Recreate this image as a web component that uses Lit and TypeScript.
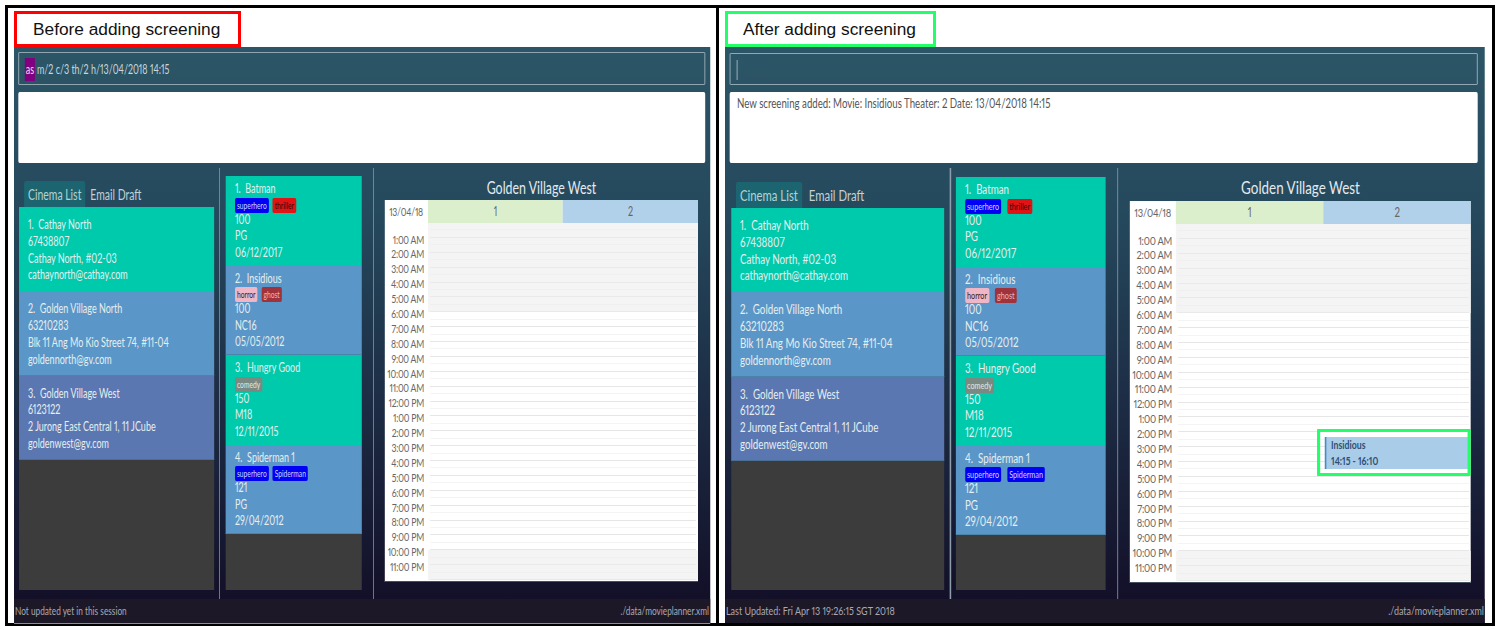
import { LitElement, css, html } from "lit";
import { customElement, property } from "lit/decorators.js";

const HOUR_HEIGHT = 14.9;

const CINEMAS = [
  { name: "1.  Cathay North", phone: "67438807", address: "Cathay North, #02-03", email: "cathaynorth@cathay.com", tone: "teal" },
  { name: "2.  Golden Village North", phone: "63210283", address: "Blk 11 Ang Mo Kio Street 74, #11-04", email: "goldennorth@gv.com", tone: "blue" },
  { name: "3.  Golden Village West", phone: "6123122", address: "2 Jurong East Central 1, 11 JCube", email: "goldenwest@gv.com", tone: "indigo" },
];

const MOVIES = [
  { name: "1.  Batman", tags: [["superhero", "t-blue"], ["thriller", "t-red"]], mins: "100", rating: "PG", date: "06/12/2017", tone: "teal" },
  { name: "2.  Insidious", tags: [["horror", "t-pink"], ["ghost", "t-brown"]], mins: "100", rating: "NC16", date: "05/05/2012", tone: "blue" },
  { name: "3.  Hungry Good", tags: [["comedy", "t-grey"]], mins: "150", rating: "M18", date: "12/11/2015", tone: "teal" },
  { name: "4.  Spiderman 1", tags: [["superhero", "t-blue"], ["Spiderman", "t-blue"]], mins: "121", rating: "PG", date: "29/04/2012", tone: "blue" },
];

const HOURS = [
  "1:00 AM", "2:00 AM", "3:00 AM", "4:00 AM", "5:00 AM", "6:00 AM", "7:00 AM", "8:00 AM", "9:00 AM", "10:00 AM", "11:00 AM", "12:00 PM",
  "1:00 PM", "2:00 PM", "3:00 PM", "4:00 PM", "5:00 PM", "6:00 PM", "7:00 PM", "8:00 PM", "9:00 PM", "10:00 PM", "11:00 PM",
];

// The screenshot is squeezed sideways, so the window is laid out wider and scaled back.
// Horizontal sizes below are written in screen pixels times --u.
@customElement("planner-window")
export class PlannerWindow extends LitElement {
  @property() variant = "before";
  @property() status = "";

  static styles = css`
    :host {
      display: block;
      flex: 1;
      font-family: Lato, "Liberation Sans", sans-serif;
      font-variant-numeric: proportional-nums;
    }
    .win {
      --sx: 0.72;
      --u: calc(1px / var(--sx));
      width: calc(696 * var(--u));
      height: 576px;
      transform: scaleX(var(--sx));
      transform-origin: left top;
      display: flex;
      flex-direction: column;
      background: linear-gradient(#2c5667 0%, #25485c 30%, #1c2c44 62%, #120c25 100%);
      color: #e6eeee;
      --cinema-col: calc(205 * var(--u));
      --movie-col: calc(153 * var(--u));
      --label-col: calc(43 * var(--u));
      --pad-left: calc(4 * var(--u));
      --cinema-right: calc(5 * var(--u));
      --sched-left: calc(11 * var(--u));
      --sched-right: calc(12 * var(--u));
      --movie-top: 8px;
      --tab-top: 13px;
      --tab-gap: calc(1 * var(--u));
      --tag-gap: calc(4 * var(--u));
    }
    .win.after {
      --sx: 0.78;
      width: calc(760 * var(--u));
      --cinema-col: calc(225 * var(--u));
      --movie-col: calc(166 * var(--u));
      --label-col: calc(46 * var(--u));
      --pad-left: calc(5 * var(--u));
      --cinema-right: calc(6 * var(--u));
      --sched-left: calc(12 * var(--u));
      --sched-right: calc(14 * var(--u));
      --movie-top: 9px;
      --tab-top: 14px;
      --tab-gap: calc(3 * var(--u));
      --tag-gap: calc(6 * var(--u));
    }
    .win.before {
      border-bottom: 1px solid #4aa0e0;
    }
    .command {
      margin: 5px calc(5 * var(--u)) 0 calc(4 * var(--u));
      height: 33px;
      box-sizing: border-box;
      border: 1px solid #9fb3bd;
      border-radius: 1px;
      display: flex;
      align-items: center;
      padding: 1px 0 0 calc(6 * var(--u));
      font-size: 12.4px;
      color: #c9d6da;
    }
    .after .command {
      margin: 6px calc(7 * var(--u)) 0 calc(5 * var(--u));
      height: 32px;
    }
    .chip {
      background: #800080;
      color: #eedcee;
      padding: 4px calc(1 * var(--u));
      margin-right: calc(2 * var(--u));
    }
    .caret {
      width: calc(1 * var(--u));
      height: 20px;
      background: #b7c6cc;
    }
    .result {
      margin: 7px calc(5 * var(--u)) 0 calc(4 * var(--u));
      height: 71px;
      box-sizing: border-box;
      background: #fff;
      border-radius: 2px;
      padding: 5px calc(7 * var(--u));
      font-size: 12.4px;
      line-height: 14px;
      color: #555;
    }
    .after .result {
      margin: 7px calc(7 * var(--u)) 0 calc(5 * var(--u));
    }
    .body {
      flex: 1;
      display: grid;
      grid-template-columns: var(--cinema-col) calc(1 * var(--u)) var(--movie-col) calc(1 * var(--u)) 1fr;
      margin-top: 5px;
      min-height: 0;
    }
    .divider {
      background: #8d9eaa;
    }
    .cinema-col {
      padding: var(--tab-top) var(--cinema-right) 9px calc(var(--pad-left) + 1 * var(--u));
      display: flex;
      flex-direction: column;
      min-width: 0;
    }
    .tabs {
      display: flex;
      height: 26px;
      padding-left: calc(5 * var(--u));
      font-size: 14.5px;
      flex: none;
    }
    .tab {
      padding: 5px calc(4 * var(--u)) 0;
      color: #c4d0d4;
    }
    .tab + .tab {
      margin-left: var(--tab-gap);
    }
    .tab.on {
      background: #1c6570;
      border-radius: 3px 3px 0 0;
      color: #b6d2d4;
    }
    .list {
      flex: 1;
      background: #3c3c3c;
      min-height: 0;
    }
    .movie-col {
      padding: var(--movie-top) calc(11 * var(--u)) 9px calc(6 * var(--u));
      display: flex;
      flex-direction: column;
      min-width: 0;
    }
    .after .movie-col {
      padding-left: calc(5 * var(--u));
    }
    .cinema {
      height: 84.3px;
      box-sizing: border-box;
      padding: 10px calc(9 * var(--u)) 0;
      font-size: 12.5px;
      line-height: 16.8px;
      white-space: pre;
    }
    .movie {
      height: 89.5px;
      box-sizing: border-box;
      padding: 5px calc(9 * var(--u)) 0;
      font-size: 12.5px;
      line-height: 16.6px;
      white-space: pre;
    }
    .teal {
      background: #00caac;
    }
    .blue {
      background: #5b96c8;
      border-bottom: 1px solid #4a84a8;
    }
    .indigo {
      background: #5a77b2;
      border-bottom: 1px solid #4a6f90;
    }
    .tags {
      display: flex;
      gap: var(--tag-gap);
      height: 14px;
    }
    .tag {
      height: 15px;
      padding: 0 calc(2 * var(--u));
      border-radius: 2px;
      font-size: 9.3px;
      line-height: 15px;
    }
    .t-blue {
      background: #0000f5;
      color: #cfd4ff;
    }
    .t-red {
      background: #e01414;
      color: #3c0808;
    }
    .t-pink {
      background: #efb6c6;
      color: #30222a;
    }
    .t-brown {
      background: #a0323c;
      color: #eab8bc;
    }
    .t-grey {
      background: #7a8a82;
      color: #e0e8e4;
    }
    .sched-col {
      padding: 0 var(--sched-right) 0 var(--sched-left);
      display: flex;
      flex-direction: column;
      min-width: 0;
    }
    .title {
      height: 32px;
      padding-top: 11px;
      box-sizing: border-box;
      text-align: center;
      font-size: 17.2px;
      line-height: 17px;
      color: #e4eaee;
      flex: none;
    }
    .after .title {
      height: 33px;
    }
    .sched {
      background: #fff;
      color: #666;
      border-bottom: 1px solid #44505c;
    }
    .head {
      display: flex;
      height: 23px;
      font-size: 12.5px;
      line-height: 24px;
      text-align: center;
    }
    .date {
      width: var(--label-col);
      flex: none;
      box-sizing: border-box;
      padding-right: calc(5 * var(--u));
      text-align: right;
      font-size: 12px;
      letter-spacing: -0.3px;
    }
    .col-a,
    .col-b {
      flex: 1;
    }
    .col-a {
      background: #dbefcc;
    }
    .col-b {
      background: #b1d1ea;
    }
    .grid {
      display: flex;
      height: 357.6px;
    }
    .labels {
      width: var(--label-col);
      flex: none;
      box-sizing: border-box;
      padding-top: 9.5px;
      padding-right: calc(4 * var(--u));
      text-align: right;
      font-size: 12px;
      letter-spacing: -0.3px;
    }
    .label {
      height: 14.9px;
      line-height: 14.9px;
      white-space: nowrap;
    }
    .slots {
      flex: 1;
      position: relative;
    }
    .slot {
      height: 7.45px;
      box-sizing: border-box;
      background: linear-gradient(var(--line), var(--line)) center bottom / calc(100% - 4 * var(--u)) 1px no-repeat;
      --line: #f4f4f4;
    }
    .slot.hour {
      --line: #e6e6e6;
    }
    .slot.off {
      background-color: #f4f4f4;
      --line: #efefef;
    }
    .slot.off.hour {
      --line: #e9e9e9;
    }
    .event {
      position: absolute;
      left: calc(50% + 1 * var(--u));
      width: calc(50% - 4 * var(--u));
      box-sizing: border-box;
      background: #a9cde9;
      border-left: calc(2 * var(--u)) solid #4a8ac6;
      padding: 0 0 0 calc(5 * var(--u));
      color: #2f4f72;
      font-weight: 700;
      font-size: 11.2px;
      line-height: 15.5px;
    }
    .ring {
      position: absolute;
      inset: -8px calc(-3 * var(--u)) -7px calc(-9 * var(--u));
      border: solid #22ff6a;
      border-width: 3.5px calc(3.5 * var(--u));
      border-radius: 1px;
    }
    .status {
      height: 24px;
      flex: none;
      box-sizing: border-box;
      padding: 0 calc(1 * var(--u)) 2px;
      background: #1d1828;
      display: flex;
      justify-content: space-between;
      align-items: center;
      font-size: 11.5px;
      color: #a9a9b0;
    }
  `;

  slotRows() {
    const rows = [];
    for (let i = 0; i < 48; i++) {
      const off = i < 12 || i >= 44;
      const hour = i % 2 === 1;
      rows.push(html`<div class="slot ${off ? "off" : ""} ${hour ? "hour" : ""}"></div>`);
    }
    return rows;
  }

  renderEvent() {
    const start = 14.25;
    const end = 16 + 10 / 60;
    return html`
      <div
        class="event"
        style="top:${start * HOUR_HEIGHT + 1}px;height:${(end - start) * HOUR_HEIGHT + 3}px"
      >
        <div>Insidious</div>
        <div>14:15 - 16:10</div>
        <div class="ring"></div>
      </div>
    `;
  }

  render() {
    const after = this.variant === "after";
    return html`
      <div class="win ${this.variant}">
        <div class="command">
          ${after
            ? html`<span class="caret"></span>`
            : html`<span class="chip">as</span><span>m/2 c/3 th/2 h/13/04/2018 14:15</span>`}
        </div>
        <div class="result">
          ${after ? "New screening added: Movie: Insidious Theater: 2 Date: 13/04/2018 14:15" : ""}
        </div>
        <div class="body">
          <div class="cinema-col">
            <div class="tabs">
              <div class="tab on">Cinema List</div>
              <div class="tab">Email Draft</div>
            </div>
            <div class="list">
              ${CINEMAS.map(
                (c) => html`
                  <div class="cinema ${c.tone}"><div>${c.name}</div><div>${c.phone}</div><div>${c.address}</div><div>${c.email}</div></div>
                `
              )}
            </div>
          </div>
          <div class="divider"></div>
          <div class="movie-col">
            <div class="list">
              ${MOVIES.map(
                (m) => html`
                  <div class="movie ${m.tone}"><div>${m.name}</div><div class="tags">${m.tags.map((t) => html`<span class="tag ${t[1]}">${t[0]}</span>`)}</div><div>${m.mins}</div><div>${m.rating}</div><div>${m.date}</div></div>
                `
              )}
            </div>
          </div>
          <div class="divider"></div>
          <div class="sched-col">
            <div class="title">Golden Village West</div>
            <div class="sched">
              <div class="head">
                <div class="date">13/04/18</div>
                <div class="col-a">1</div>
                <div class="col-b">2</div>
              </div>
              <div class="grid">
                <div class="labels">
                  ${HOURS.map((h) => html`<div class="label">${h}</div>`)}
                </div>
                <div class="slots">
                  ${this.slotRows()}
                  ${after ? this.renderEvent() : ""}
                </div>
              </div>
            </div>
          </div>
        </div>
        <div class="status">
          <span>${this.status}</span>
          <span>./data/movieplanner.xml</span>
        </div>
      </div>
    `;
  }
}

@customElement("app-root")
export class AppRoot extends LitElement {
  static styles = css`
    :host {
      display: block;
      width: 1496px;
      height: 630px;
      background: #fff;
      overflow: hidden;
    }
    .frame {
      margin: 5px 0 0 5px;
      width: 1490px;
      height: 621px;
      box-sizing: border-box;
      border: 3px solid #000;
      display: grid;
      grid-template-columns: 708px 3px 1fr;
    }
    .rule {
      background: #000;
      position: relative;
      z-index: 1;
    }
    .cell {
      display: flex;
      flex-direction: column;
      padding: 3px 0 0 6px;
      width: 696px;
    }
    .cell.right {
      width: 760px;
    }
    .label {
      width: 227px;
      height: 36px;
      box-sizing: border-box;
      border: 3px solid #ff0000;
      padding-left: 16px;
      font-family: "Liberation Sans", sans-serif;
      font-size: 17.3px;
      line-height: 31px;
      color: #111;
    }
    .right .label {
      width: 211px;
      border-color: #22ff6a;
      padding-left: 15px;
    }
  `;

  render() {
    return html`
      <div class="frame">
        <div class="cell">
          <div class="label">Before adding screening</div>
          <planner-window variant="before" status="Not updated yet in this session"></planner-window>
        </div>
        <div class="rule"></div>
        <div class="cell right">
          <div class="label">After adding screening</div>
          <planner-window variant="after" status="Last Updated: Fri Apr 13 19:26:15 SGT 2018"></planner-window>
        </div>
      </div>
    `;
  }
}
